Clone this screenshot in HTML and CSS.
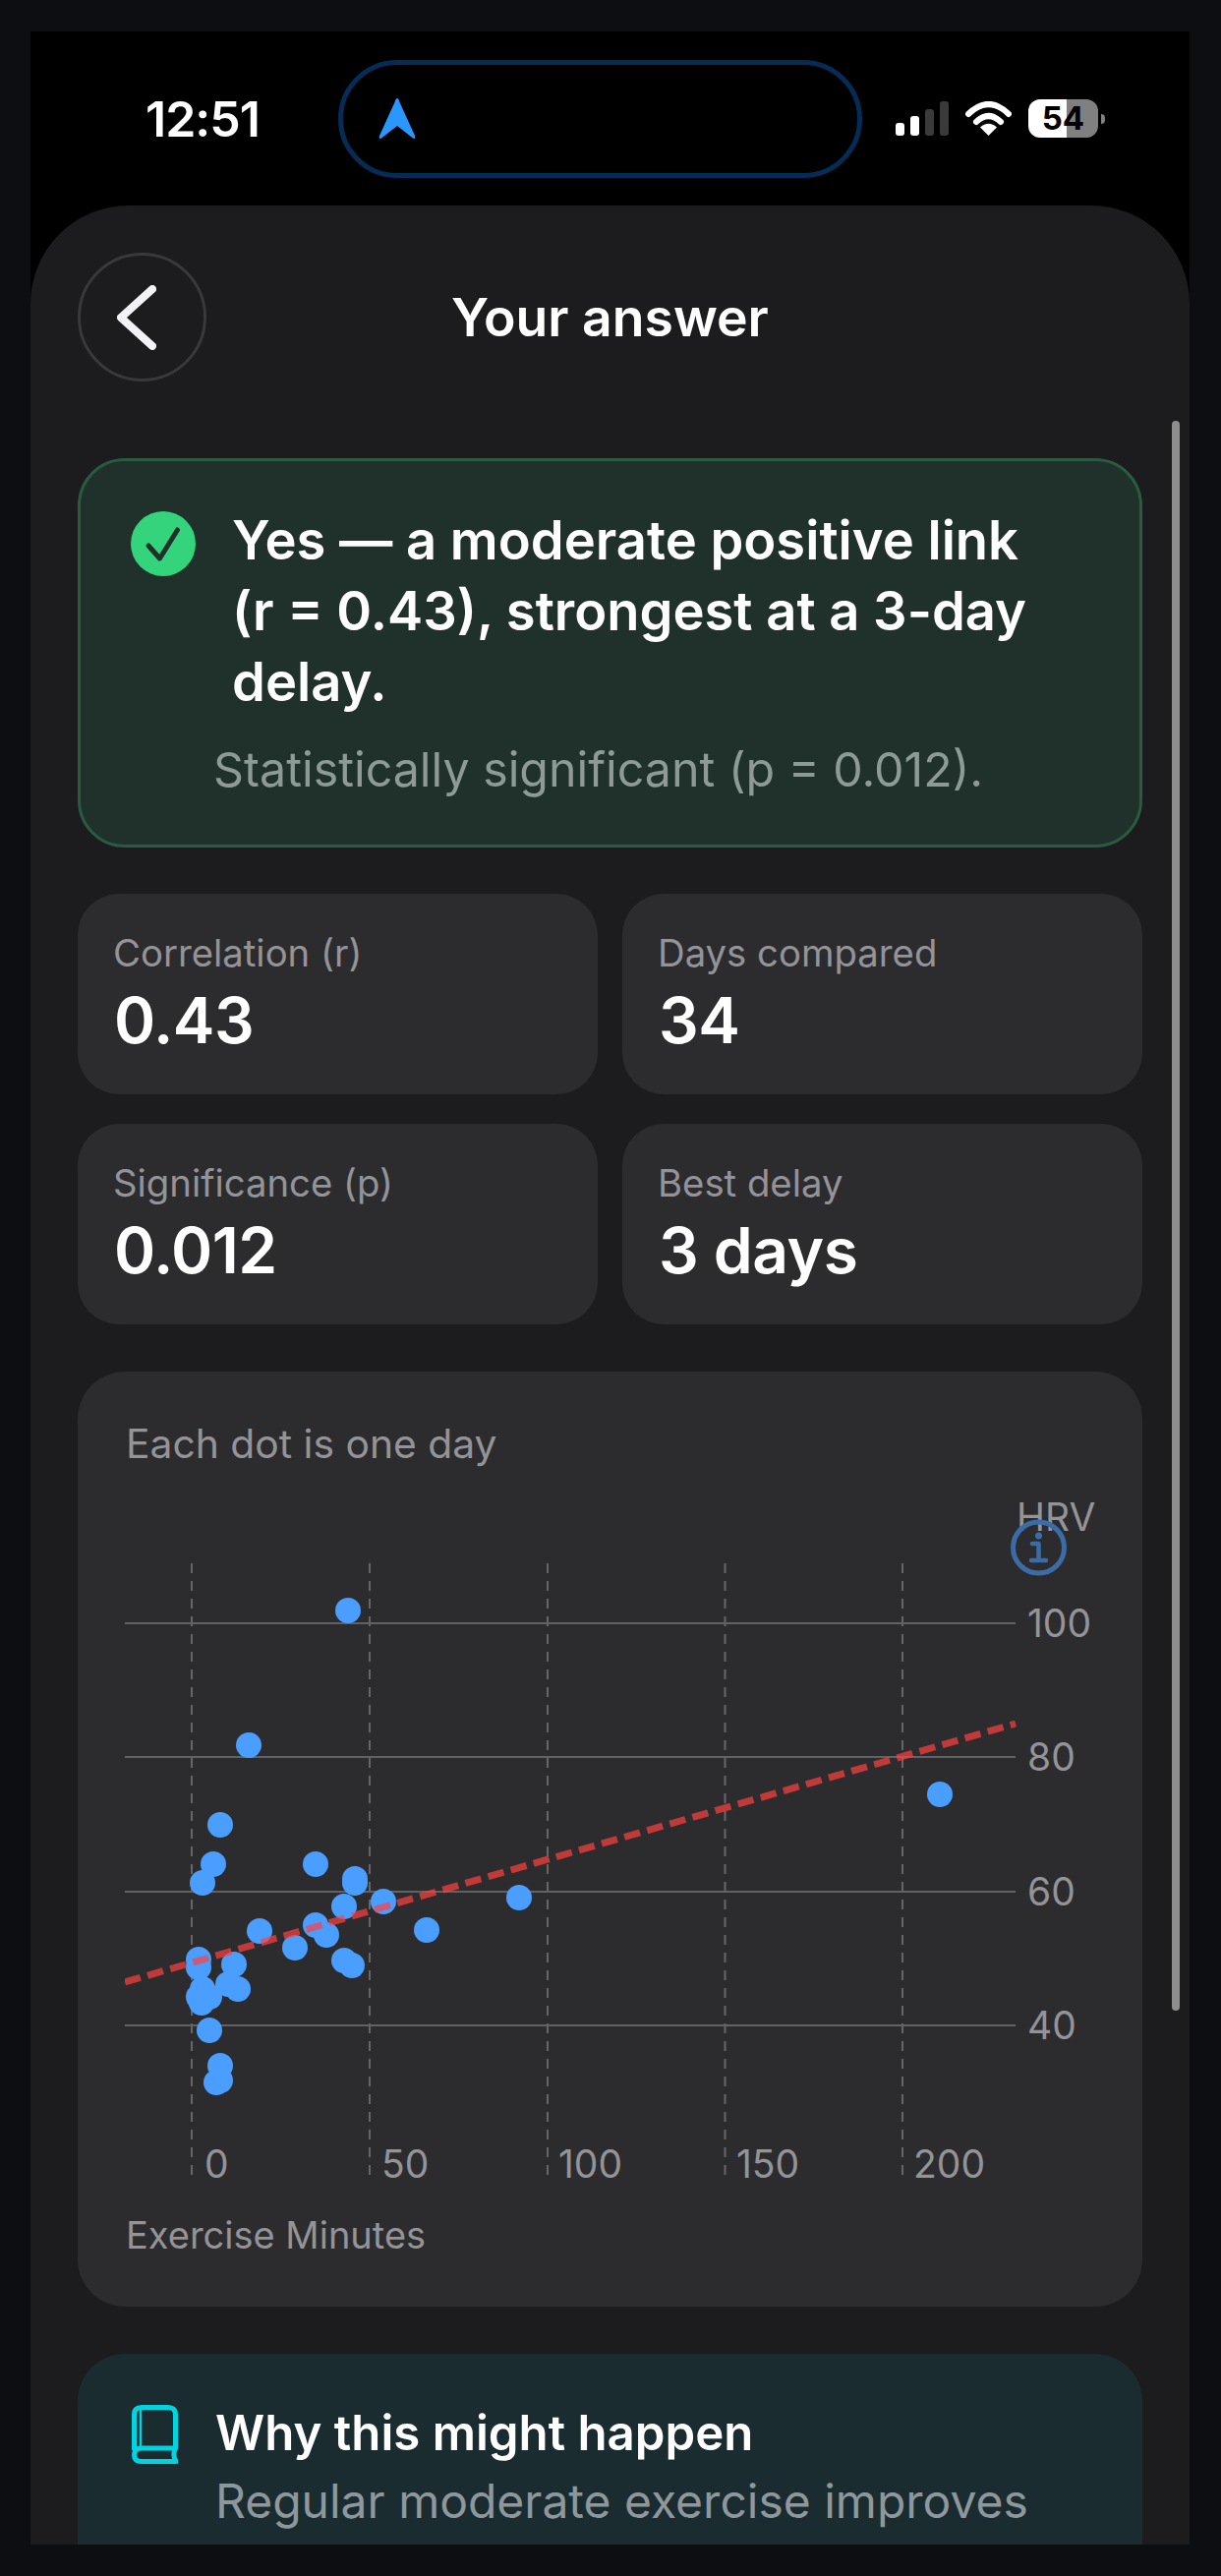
FILE: index.html
```html
<!DOCTYPE html>
<html lang="en">
<head>
<meta charset="utf-8">
<title>Your answer</title>
<link rel="stylesheet" href="styles.css">
</head>
<body>
<div class="device">
  <div class="status">
    <div class="time">12:51</div>
    <div class="island">
      <svg class="nav" viewBox="0 0 40 44"><path d="M20 1 Q21.500 1 22.500 5 L38 39 Q39 43 36 41.500 L20 29 L4 41.500 Q1 43 2 39 L17.500 5 Q18.500 1 20 1 Z"/></svg>
    </div>
    <div class="sys">
      <svg class="signal" viewBox="0 0 54 35">
        <rect class="on" x="0" y="22" width="9" height="13" rx="3"/>
        <rect class="on" x="15" y="15" width="9" height="20" rx="3"/>
        <rect class="off" x="30" y="8" width="9" height="27" rx="3"/>
        <rect class="off" x="45" y="0" width="9" height="35" rx="3"/>
      </svg>
      <svg class="wifi" viewBox="0 0 47 35">
        <path class="arc" d="M3 13 Q23.500 -7 44 13"/>
        <path class="arc" d="M11 21 Q23.500 9 36 21"/>
        <path class="wedge" d="M23.500 35 L15 26.500 Q23.500 19 32 26.500 Z"/>
      </svg>
      <div class="battery">54</div>
      <div class="nub"></div>
    </div>
  </div>

  <main class="screen">
    <div class="scrollbar"></div>
    <header class="head">
      <button class="back" type="button" aria-label="Back">
        <svg viewBox="0 0 40 66"><path d="M36 4 L4 33 L36 62"/></svg>
      </button>
      <h1 class="title">Your answer</h1>
    </header>

    <section class="answer">
      <div class="answer-row">
        <svg class="check" viewBox="0 0 66 66"><circle cx="33" cy="33" r="33"/><path d="M18 35 L29.500 48 L47.500 19"/></svg>
        <p class="answer-text">Yes — a moderate positive link (r = 0.43), strongest at a 3-day delay.</p>
      </div>
      <p class="answer-sub">Statistically significant (p = 0.012).</p>
    </section>

    <section class="stats">
      <div class="stat"><div class="stat-label">Correlation (r)</div><div class="stat-value">0.43</div></div>
      <div class="stat"><div class="stat-label">Days compared</div><div class="stat-value">34</div></div>
      <div class="stat"><div class="stat-label">Significance (p)</div><div class="stat-value">0.012</div></div>
      <div class="stat"><div class="stat-label">Best delay</div><div class="stat-value">3 days</div></div>
    </section>

    <section class="chart-card">
      <div class="chart-title">Each dot is one day</div>
      <svg class="chart" viewBox="127 1510 1000 720">
        <g class="grid-v">
          <line x1="195" y1="1590" x2="195" y2="2220"/>
          <line x1="376" y1="1590" x2="376" y2="2220"/>
          <line x1="557" y1="1590" x2="557" y2="2220"/>
          <line x1="737.500" y1="1590" x2="737.500" y2="2220"/>
          <line x1="918" y1="1590" x2="918" y2="2220"/>
        </g>
        <g class="grid-h">
          <line x1="127" y1="1651" x2="1033" y2="1651"/>
          <line x1="127" y1="1787" x2="1033" y2="1787"/>
          <line x1="127" y1="1924" x2="1033" y2="1924"/>
          <line x1="127" y1="2060" x2="1033" y2="2060"/>
        </g>
        <g class="dots">
          <circle cx="354" cy="1638" r="13"/>
          <circle cx="253" cy="1775" r="13"/>
          <circle cx="224" cy="1856" r="13"/>
          <circle cx="217" cy="1896" r="13"/>
          <circle cx="206" cy="1915" r="13"/>
          <circle cx="321" cy="1896" r="13"/>
          <circle cx="361" cy="1911" r="13"/>
          <circle cx="361" cy="1915" r="13"/>
          <circle cx="390" cy="1934" r="13"/>
          <circle cx="350" cy="1939" r="13"/>
          <circle cx="264" cy="1964" r="13"/>
          <circle cx="321" cy="1958" r="13"/>
          <circle cx="332" cy="1968" r="13"/>
          <circle cx="300" cy="1981" r="13"/>
          <circle cx="350" cy="1994" r="13"/>
          <circle cx="358" cy="1999" r="13"/>
          <circle cx="202" cy="1993" r="13"/>
          <circle cx="202" cy="2001" r="13"/>
          <circle cx="238" cy="1998" r="13"/>
          <circle cx="232" cy="2018" r="13"/>
          <circle cx="242" cy="2023" r="13"/>
          <circle cx="206" cy="2023" r="13"/>
          <circle cx="213" cy="2031" r="13"/>
          <circle cx="202" cy="2031" r="13"/>
          <circle cx="205" cy="2037" r="13"/>
          <circle cx="213" cy="2065" r="13"/>
          <circle cx="224" cy="2101" r="13"/>
          <circle cx="224" cy="2116" r="13"/>
          <circle cx="220" cy="2118" r="13"/>
          <circle cx="528" cy="1930" r="13"/>
          <circle cx="434" cy="1963" r="13"/>
          <circle cx="956" cy="1825" r="13"/>
        </g>
        <line class="trend" x1="127" y1="2016" x2="1033" y2="1753"/>
        <g class="axis">
          <text x="1034" y="1557">HRV</text>
          <text x="1045" y="1665">100</text>
          <text x="1045" y="1801">80</text>
          <text x="1045" y="1938">60</text>
          <text x="1045" y="2074">40</text>
          <text x="208" y="2215">0</text>
          <text x="388" y="2215">50</text>
          <text x="568" y="2215">100</text>
          <text x="749" y="2215">150</text>
          <text x="929" y="2215">200</text>
        </g>
        <g class="info">
          <circle cx="1056.500" cy="1574" r="26"/>
          <path class="info-stem" d="M1050 1570 H1056.500 V1587 M1049 1587 H1064"/>
          <circle class="info-dot" cx="1056.500" cy="1562" r="3.500"/>
        </g>
      </svg>
      <div class="chart-foot">Exercise Minutes</div>
    </section>

    <section class="why">
      <svg class="book" viewBox="0 0 47 60">
        <path d="M2.500 46 V10 Q2.500 2.500 10 2.500 H37 Q44.500 2.500 44.500 10 V44 H10 Q2.500 44 2.500 51 Q2.500 57.500 10 57.500 H45 Q41 51 44.500 44"/>
        <path class="spine" d="M9 3 V44"/>
      </svg>
      <div class="why-body">
        <div class="why-title">Why this might happen</div>
        <div class="why-text">Regular moderate exercise improves</div>
      </div>
    </section>
  </main>
</div>
</body>
</html>
```

FILE: styles.css
```css
* { box-sizing: border-box; }
html, body { margin: 0; padding: 0; }
body {
  width: 1242px;
  height: 2620px;
  padding: 32px 32px 32px 31px;
  background: #0c0e12;
  font-family: Inter, "Liberation Sans", sans-serif;
  overflow: hidden;
}
.device {
  height: 2556px;
  background: #000;
  display: flex;
  flex-direction: column;
  overflow: hidden;
}

/* status bar */
.status {
  flex: 0 0 177px;
  display: flex;
  align-items: center;
  padding-left: 117px;
  color: #fff;
}
.time { width: 196px; font-size: 50px; font-weight: 600; letter-spacing: -1px; }
.island {
  width: 533px;
  height: 120px;
  border: 5px solid #062c56;
  border-radius: 60px;
  display: flex;
  align-items: center;
  padding-left: 35px;
  background: #000;
}
.nav { width: 40px; height: 44px; }
.nav path { fill: #2a96ff; }
.sys { display: flex; align-items: center; margin-left: 34px; }
.signal { width: 54px; height: 35px; }
.signal .on { fill: #fff; }
.signal .off { fill: #3a3a3a; }
.wifi { width: 47px; height: 35px; margin-left: 17px; }
.wifi .arc { fill: none; stroke: #fff; stroke-width: 6; stroke-linecap: round; }
.wifi .wedge { fill: #fff; }
.battery {
  width: 71px;
  height: 39px;
  margin-left: 17px;
  border-radius: 12px;
  background: linear-gradient(90deg, #fff 55%, #808080 55%);
  color: #000;
  font-size: 33px;
  font-weight: 700;
  line-height: 39px;
  text-align: center;
}
.nub { width: 4px; height: 10px; margin-left: 3px; background: #808080; border-radius: 0 4px 4px 0; }

/* screen */
.screen {
  position: relative;
  flex: 1;
  background: #1c1c1e;
  border-radius: 100px 100px 0 0;
  padding: 48px 48px 0 48px;
  overflow: hidden;
}
.scrollbar {
  position: absolute;
  left: 1161px;
  top: 219px;
  width: 8px;
  height: 1617px;
  border-radius: 4px;
  background: #8e8e8e;
}
.head {
  display: grid;
  grid-template-columns: 131px 1fr 131px;
  align-items: center;
  height: 130px;
}
.back {
  width: 131px;
  height: 131px;
  padding: 0 11px 0 0;
  border: 3px solid #39393b;
  border-radius: 50%;
  background: transparent;
  display: flex;
  align-items: center;
  justify-content: center;
}
.back svg { width: 40px; height: 66px; }
.back path { fill: none; stroke: #f2f2f7; stroke-width: 8; stroke-linecap: round; stroke-linejoin: round; }
.title {
  margin: 0;
  text-align: center;
  color: #fff;
  font-size: 53.500px;
  font-weight: 600;
}

/* answer card */
.answer {
  margin-top: 79px;
  height: 396px;
  padding: 44px 84px 0 51px;
  background: #20302a;
  border: 3px solid #2a5a42;
  border-radius: 48px;
}
.answer-row { display: flex; gap: 37px; }
.check { flex: 0 0 66px; width: 66px; height: 66px; margin-top: 7px; }
.check circle { fill: #34d47c; }
.check path { fill: none; stroke: #1f3029; stroke-width: 5; stroke-linecap: round; stroke-linejoin: round; }
.answer-text {
  margin: 0;
  color: #fff;
  font-size: 54.300px;
  line-height: 72px;
  font-weight: 600;
}
.answer-sub {
  margin: 25px 0 0 84px;
  color: #8e9a96;
  font-size: 48.300px;
  line-height: 58px;
}

/* stats */
.stats {
  margin-top: 47px;
  display: grid;
  grid-template-columns: 1fr 1fr;
  gap: 30px 25px;
}
.stat {
  height: 204px;
  padding: 38px 36px 0;
  background: #2c2c2e;
  border-radius: 42px;
}
.stat-label { color: #939398; font-size: 38.300px; line-height: 44px; }
.stat-value { margin: 11px 0 0 1px; color: #fff; font-size: 64px; line-height: 72px; font-weight: 600; letter-spacing: -0.5px; }

/* chart */
.chart-card {
  margin-top: 48px;
  height: 951px;
  padding: 49px 0 0 49px;
  background: #2c2c2e;
  border-radius: 48px;
}
.chart-title { color: #939398; font-size: 40.800px; line-height: 48px; }
.chart { display: block; width: 1000px; height: 720px; margin: 18px 0 0 -1px; }
.grid-v line { stroke: #666668; stroke-width: 2; stroke-dasharray: 10 8; }
.grid-h line { stroke: #626264; stroke-width: 2; }
.dots circle { fill: #4a9eff; }
.trend { stroke: #ff4040; stroke-opacity: 0.7; stroke-width: 7; stroke-dasharray: 16.500 7.550; }
.axis text { fill: #939398; font-size: 39px; }
.info circle { fill: none; stroke: #3b6ca8; stroke-width: 5; }
.info .info-dot { fill: #3b6ca8; stroke: none; }
.info-stem { fill: none; stroke: #3b6ca8; stroke-width: 4.500; stroke-linecap: round; stroke-linejoin: round; }
.chart-foot { margin-top: 20px; color: #939398; font-size: 38px; line-height: 46px; }

/* why */
.why {
  margin-top: 48px;
  height: 300px;
  padding: 50px 40px 0 55px;
  background: #1a2c30;
  border-radius: 48px;
  display: flex;
  gap: 38px;
}
.book { flex: 0 0 47px; width: 47px; height: 60px; margin-top: 2px; }
.book path { fill: none; stroke: #00d4e0; stroke-width: 5; stroke-linejoin: round; }
.book .spine { stroke-width: 2.500; }
.why-title { color: #fff; font-size: 49.200px; line-height: 60px; font-weight: 600; }
.why-text { margin-top: 5px; color: #8e989c; font-size: 48px; line-height: 70px; white-space: nowrap; }
```
